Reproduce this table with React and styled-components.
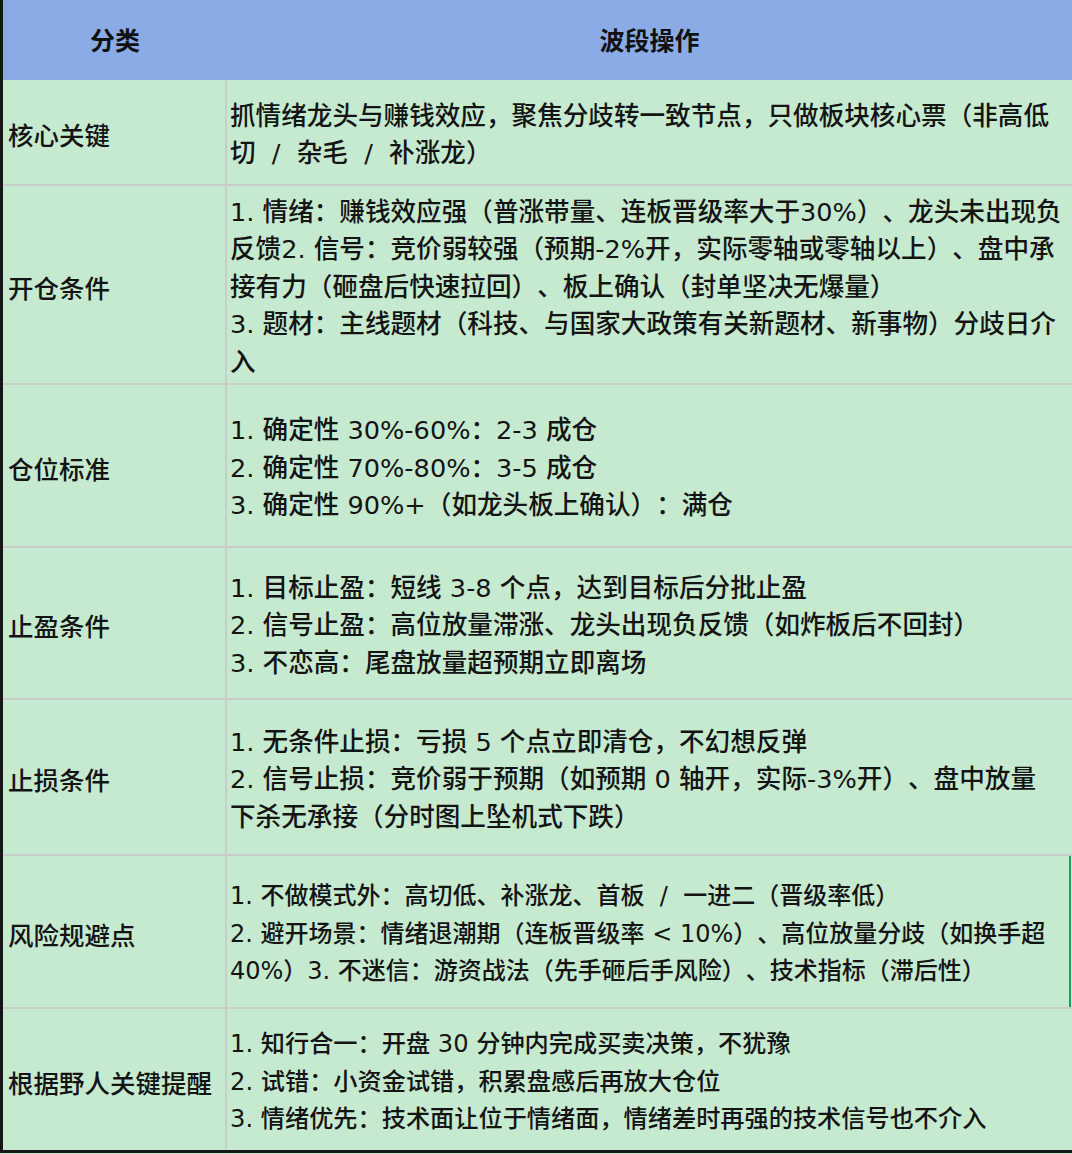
import React from "react";
import styled, { createGlobalStyle } from "styled-components";

const Global = createGlobalStyle`
  html, body {
    margin: 0;
    padding: 0;
    background: #c6ead0;
  }
  body {
    font-family: "Liberation Sans", "Noto Sans CJK SC", sans-serif;
    color: #141414;
  }
`;

const Table = styled.div`
  width: 1072px;
  box-sizing: border-box;
  border-left: 3px solid #161616;
  border-bottom: 3px solid #161616;
  background: #c6ead0;
`;

const HeaderRow = styled.div`
  display: grid;
  grid-template-columns: 224px 1fr;
  height: 80px;
  background: #8aabe6;
`;

const HeaderCell = styled.div`
  display: flex;
  align-items: center;
  justify-content: center;
  font-size: 25px;
  font-weight: 700;
  color: #111;
  padding-bottom: 2px;
`;

const Row = styled.div`
  display: grid;
  grid-template-columns: 224px 1fr;
  box-sizing: border-box;
  height: ${(p) => p.$h}px;
  border-bottom: ${(p) => (p.$last ? "none" : "2px solid #c9cdca")};
`;

const Label = styled.div`
  display: flex;
  align-items: center;
  padding: 3px 0 0 5px;
  border-right: 2px solid #c9cdca;
  font-size: 25.5px;
  font-weight: 500;
  white-space: nowrap;
`;

const Content = styled.div`
  display: flex;
  flex-direction: column;
  justify-content: center;
  padding: 6px 0 0 3px;
  font-family: "DejaVu Sans", "Noto Sans CJK SC", sans-serif;
  font-size: ${(p) => p.$size}px;
  font-weight: 500;
  line-height: 37.5px;
  text-spacing-trim: space-all;
  box-sizing: border-box;
  margin-right: ${(p) => (p.$marked ? "1px" : "0")};
  border-right: ${(p) => (p.$marked ? "2px solid #1f9d5c" : "none")};
`;

const Line = styled.div`
  white-space: pre;
`;

const rows = [
  {
    label: "核心关键",
    h: 106,
    size: 25.6,
    lines: [
      "抓情绪龙头与赚钱效应，聚焦分歧转一致节点，只做板块核心票（非高低",
      "切  /  杂毛  /  补涨龙）",
    ],
  },
  {
    label: "开仓条件",
    h: 199,
    size: 25.6,
    lines: [
      "1. 情绪：赚钱效应强（普涨带量、连板晋级率大于30%）、龙头未出现负",
      "反馈2. 信号：竞价弱较强（预期-2%开，实际零轴或零轴以上）、盘中承",
      "接有力（砸盘后快速拉回）、板上确认（封单坚决无爆量）",
      "3. 题材：主线题材（科技、与国家大政策有关新题材、新事物）分歧日介",
      "入",
    ],
  },
  {
    label: "仓位标准",
    h: 163,
    size: 25.6,
    lines: [
      "1. 确定性 30%-60%：2-3 成仓",
      "2. 确定性 70%-80%：3-5 成仓",
      "3. 确定性 90%+（如龙头板上确认）：满仓",
    ],
  },
  {
    label: "止盈条件",
    h: 152,
    size: 25.6,
    lines: [
      "1. 目标止盈：短线 3-8 个点，达到目标后分批止盈",
      "2. 信号止盈：高位放量滞涨、龙头出现负反馈（如炸板后不回封）",
      "3. 不恋高：尾盘放量超预期立即离场",
    ],
  },
  {
    label: "止损条件",
    h: 156,
    size: 25.6,
    lines: [
      "1. 无条件止损：亏损 5 个点立即清仓，不幻想反弹",
      "2. 信号止损：竞价弱于预期（如预期 0 轴开，实际-3%开）、盘中放量",
      "下杀无承接（分时图上坠机式下跌）",
    ],
  },
  {
    label: "风险规避点",
    h: 153,
    size: 24,
    marked: true,
    lines: [
      "1. 不做模式外：高切低、补涨龙、首板  /  一进二（晋级率低）",
      "2. 避开场景：情绪退潮期（连板晋级率 < 10%）、高位放量分歧（如换手超",
      "40%）3. 不迷信：游资战法（先手砸后手风险）、技术指标（滞后性）",
    ],
  },
  {
    label: "根据野人关键提醒",
    h: 141,
    size: 24.2,
    lines: [
      "1. 知行合一：开盘 30 分钟内完成买卖决策，不犹豫",
      "2. 试错：小资金试错，积累盘感后再放大仓位",
      "3. 情绪优先：技术面让位于情绪面，情绪差时再强的技术信号也不介入",
    ],
  },
];

export default function App() {
  return (
    <>
      <Global />
      <Table>
        <HeaderRow>
          <HeaderCell>分类</HeaderCell>
          <HeaderCell>波段操作</HeaderCell>
        </HeaderRow>
        {rows.map((r, i) => (
          <Row key={r.label} $h={r.h} $last={i === rows.length - 1}>
            <Label>{r.label}</Label>
            <Content $size={r.size} $marked={r.marked}>
              {r.lines.map((l, j) => (
                <Line key={j}>{l}</Line>
              ))}
            </Content>
          </Row>
        ))}
      </Table>
    </>
  );
}
